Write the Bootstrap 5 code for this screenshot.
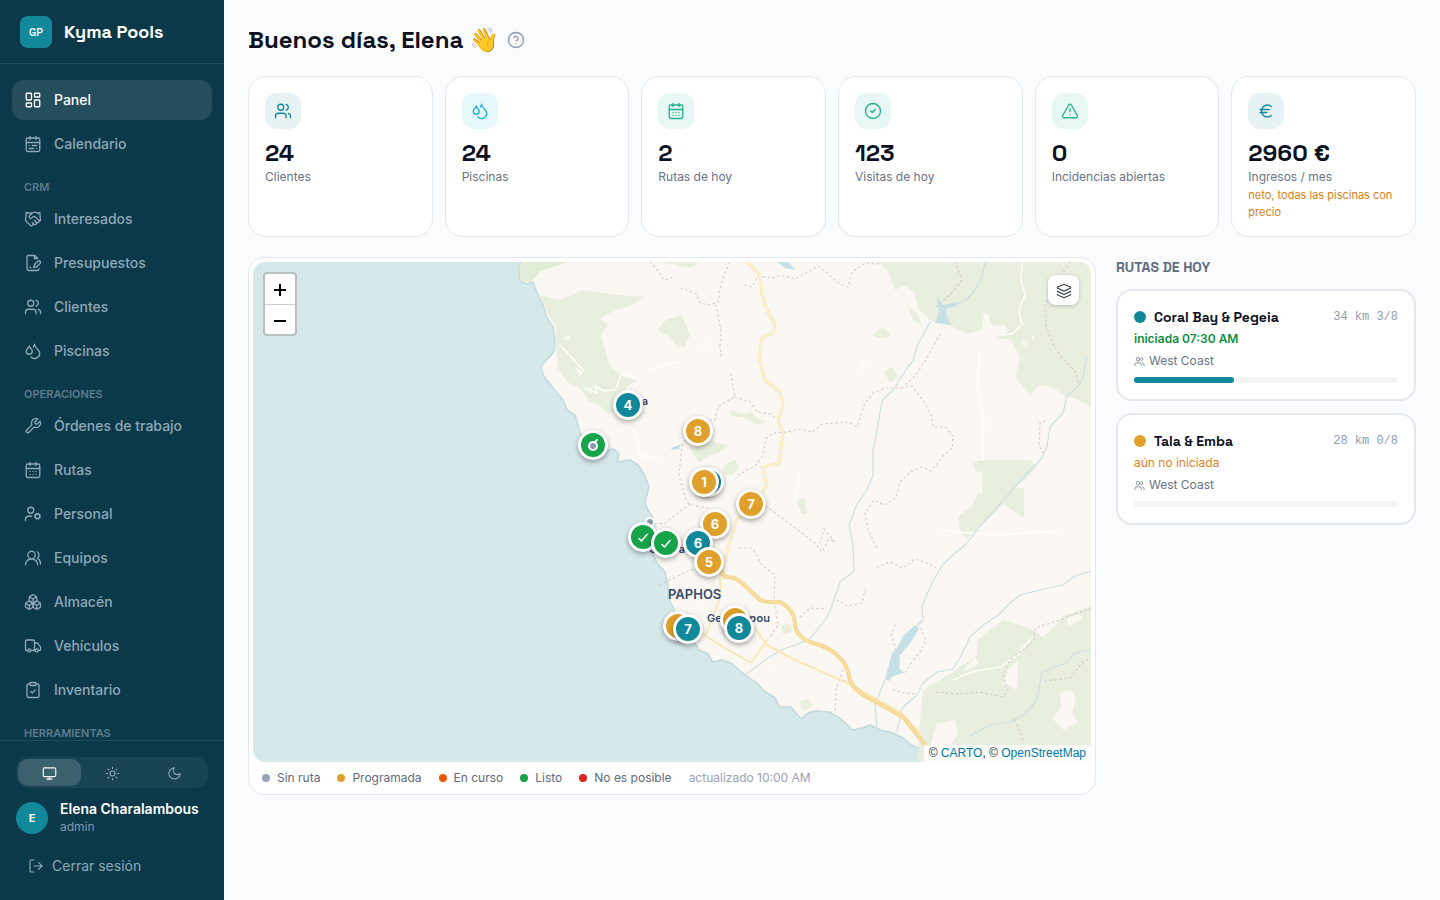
<!DOCTYPE html>
<html lang="es">
<head>
<meta charset="utf-8">
<meta name="viewport" content="width=device-width, initial-scale=1">
<title>Kyma Pools – Panel</title>
<link href="https://cdn.jsdelivr.net/npm/bootstrap@5.3.0/dist/css/bootstrap.min.css" rel="stylesheet">
<style>
:root{--ink:#0c1122;--muted:#697386;--teal:#12899a;--amber:#dfa12b;--green:#16a34a;--line:#e3e8ee}
body{font-family:Inter,"Noto Sans",sans-serif;background:#f9fbfd;color:var(--ink);font-size:14px;line-height:20px}
.ico{fill:none;stroke:currentColor;stroke-width:1.75;stroke-linecap:round;stroke-linejoin:round;width:18px;height:18px;flex:none}
.display-face{font-family:"Space Grotesk",Inter,sans-serif}
/* Sidebar */
.side{width:224px;height:100vh;top:0;background:#0b394a;color:#8ba3b5}
.side-head{height:64px;padding:0 20px;border-bottom:1px solid #234d5c}
.logo-box{width:32px;height:32px;border-radius:8px;background:var(--teal);color:#fff;font-size:11px;font-weight:500}
.brand-name{font-size:18px;font-weight:600;color:#fff}
.side-scroll{padding:16px 12px 0;overflow:hidden;min-height:0}
.side-link{height:40px;flex-shrink:0;padding:0 12px;margin-bottom:4px;gap:12px;border-radius:12px;color:#8fa8b8;font-weight:500;font-size:14px}
.side-link:hover{color:#fff}
.side-link.active{background:#254e5d;color:#fff}
.side-label{font-size:11px;font-weight:600;line-height:15px;padding:12px 12px 4px;color:#5d7c8e;height:31px;margin:0;flex-shrink:0}
.side-foot{padding:16px;border-top:1px solid #234d5c;height:160px}
.seg{background:#174353;border-radius:12px;padding:2px;height:31px}
.seg-btn{border:0;background:transparent;color:#8fa8b8;border-radius:10px;padding:0}
.seg-btn.on{background:#3b616e;color:#fff}
.seg-btn .ico{width:15px;height:15px}
.user-row{margin:12px 0}
.avatar{width:32px;height:32px;background:var(--teal);color:#fff;font-size:11px;font-weight:700}
.user-name{color:#fff;font-weight:600;line-height:18px}
.user-role{font-size:12px;line-height:17px;color:#7f9aaa}
.exit-btn{border:0;background:none;color:#8fa8b8;padding:0 12px;gap:8px;height:38px}
.exit-btn .ico{width:16px;height:16px}
/* Content */
.content-area{padding:24px;min-width:0}
.greet{font-size:24px;line-height:32px;font-weight:600}
.help-btn{border:0;background:none;padding:0;color:#8d97ab;line-height:0}
.stats{display:grid;grid-template-columns:repeat(6,minmax(0,1fr));gap:12px;margin-top:20px}
.stat{background:#fff;border:1px solid var(--line);border-radius:18px;padding:16px 16px 15px;min-height:161px}
.stat-ico{width:36px;height:36px;border-radius:12px;margin-bottom:8px}
.t-teal{background:#e6f2f4;color:var(--teal)}.t-cyan{background:#e7f8fb;color:#13b3cc}.t-green{background:#e7f7f3;color:#22b190}
.stat-num{font-size:24px;line-height:32px;font-weight:700}
.cap{font-size:12px;line-height:16px;color:var(--muted)}
.cap-warn{font-size:11px;line-height:17px;color:#d97f16;margin-top:2px}
.board{display:grid;grid-template-columns:minmax(0,1fr) 300px;gap:20px;margin-top:20px;align-items:start}
.map-card{background:#fff;border:1px solid var(--line);border-radius:16px;padding:4px 4px 0}
.map-view{height:500px;border-radius:12px;background:#d5e8ea}
.map-view>svg{width:100%;height:100%;display:block}
.zoomer{left:10px;top:10px;border:2px solid #b8bfc0;border-radius:4px;width:34px;background:#fff}
.zoomer button{display:block;width:30px;height:30px;border:0;background:none;padding:0;color:#000}
.zoomer button+button{border-top:1px solid #ccc}
.layer-btn{right:12px;top:13px;width:31px;height:30px;border:0;border-radius:8px;background:#fff;color:#374151;padding:0;box-shadow:0 1px 4px rgba(0,0,0,.2)}
.layer-btn .ico{width:16px;height:16px}
.attrib{right:0;bottom:0;background:#ffffffd9;font:12px/17px "Liberation Sans",Arial,sans-serif;padding:0 5px;color:#333}
.attrib a{color:#0078a8;text-decoration:none}
/* Pins are placed relative to the map centre */
.pin{width:30px;height:30px;border:3px solid #fff;border-radius:50%;color:#fff;font-size:13px;font-weight:700;line-height:1;padding:0;box-shadow:0 2px 5px rgba(0,0,0,.35);left:calc(50% + var(--x)*1px - 15px);top:calc(50% + var(--y)*1px - 15px)}
.p-teal{background:var(--teal)}.p-amber{background:var(--amber)}.p-green{background:#17a34a}
.pin .ico{width:14px;height:14px}
.pin .ico.tick{width:12px;height:12px;stroke-width:3}
.legend-row{padding:8px 9px;gap:17px;font-size:12px;line-height:16px;color:#5f6a7d}
.legend-row span{display:inline-flex;align-items:center;gap:7px}
.legend-row i{width:8px;height:8px;border-radius:50%}
.g-none{background:#94a3b8}.g-plan{background:var(--amber)}.g-run{background:#ea580c}.g-done{background:var(--green)}.g-fail{background:#dc2626}
.routes-title{font-size:14px;line-height:20px;font-weight:600;color:#5f6b7f;margin:0 0 12px}
.route{background:#fff;border:2px solid var(--line);border-radius:16px;padding:16px;height:112px;margin-bottom:12px;color:inherit;text-decoration:none}
.route-dot{width:12px;height:12px;border-radius:50%}
.route-name{font-weight:600}
.route-km{font:12px/20px "Liberation Mono",monospace;color:#929bb0;white-space:pre}
.route-state{font-size:12px;line-height:16px;margin-top:4px}
.route-team{font-size:12px;line-height:16px;margin-top:6px;color:var(--muted);gap:4px}
.route-team .ico{width:11px;height:11px}
.bar-track{height:6px;border-radius:3px;background:#f2f4f6;margin-top:8px}
.bar-fill{height:6px;border-radius:3px;background:var(--teal)}
@media (max-width:1100px){.stats{grid-template-columns:repeat(3,minmax(0,1fr))}.board{grid-template-columns:minmax(0,1fr)}}
</style>
</head>
<body>
<svg width="0" height="0" class="position-absolute" aria-hidden="true"><defs>
<symbol id="dash" viewBox="0 0 24 24"><rect x="3" y="3" width="7" height="9" rx="1"/><rect x="14" y="3" width="7" height="5" rx="1"/><rect x="14" y="12" width="7" height="9" rx="1"/><rect x="3" y="16" width="7" height="5" rx="1"/></symbol>
<symbol id="calr" viewBox="0 0 24 24"><rect x="3" y="4" width="18" height="18" rx="2"/><path d="M16 2v4M3 10h18M8 2v4M17 14h-6M13 18H7M7 14h.01M17 18h.01"/></symbol>
<symbol id="cald" viewBox="0 0 24 24"><rect x="3" y="4" width="18" height="18" rx="2"/><path d="M16 2v4M3 10h18M8 2v4M8 14h.01M12 14h.01M16 14h.01M8 18h.01M12 18h.01M16 18h.01"/></symbol>
<symbol id="hand" viewBox="0 0 24 24"><path d="m11 17 2 2a1 1 0 1 0 3-3"/><path d="m14 14 2.5 2.5a1 1 0 1 0 3-3l-3.88-3.88a3 3 0 0 0-4.24 0l-.88.88a1 1 0 1 1-3-3l2.81-2.81a5.79 5.79 0 0 1 7.06-.87l.47.28a2 2 0 0 0 1.42.25L21 4"/><path d="m21 3 1 11h-2M3 3 2 14l6.5 6.5a1 1 0 1 0 3-3M3 4h8"/></symbol>
<symbol id="file" viewBox="0 0 24 24"><path d="M20 19.5v.5a2 2 0 0 1-2 2H6a2 2 0 0 1-2-2V4a2 2 0 0 1 2-2h8.5L18 5.500M14 2v4h4M8 18h1"/><path d="M18.42 9.610a2.100 2.100 0 1 1 2.970 2.970L16.950 17 13 18l.99-3.950 4.430-4.440Z"/></symbol>
<symbol id="users" viewBox="0 0 24 24"><path d="M16 21v-2a4 4 0 0 0-4-4H6a4 4 0 0 0-4 4v2"/><circle cx="9" cy="7" r="4"/><path d="M22 21v-2a4 4 0 0 0-3-3.87M16 3.13a4 4 0 0 1 0 7.75"/></symbol>
<symbol id="drops" viewBox="0 0 24 24"><path d="M7 16.3c2.200 0 4-1.830 4-4.050 0-1.160-.57-2.260-1.710-3.190S7.290 6.750 7 5.300c-.29 1.450-1.140 2.840-2.290 3.760S3 11.100 3 12.250c0 2.220 1.800 4.050 4 4.050z"/><path d="M12.560 6.600A10.970 10.970 0 0 0 14 3.020c.5 2.500 2 4.900 4 6.500s3 3.500 3 5.500a6.980 6.980 0 0 1-11.910 4.970"/></symbol>
<symbol id="wrench" viewBox="0 0 24 24"><path d="M14.7 6.3a1 1 0 0 0 0 1.4l1.6 1.6a1 1 0 0 0 1.400 0l3.770-3.770a6 6 0 0 1-7.940 7.940l-6.910 6.910a2.120 2.120 0 0 1-3-3l6.910-6.910a6 6 0 0 1 7.940-7.940l-3.760 3.760z"/></symbol>
<symbol id="ucog" viewBox="0 0 24 24"><circle cx="9" cy="7" r="4"/><path d="M10 15H6a4 4 0 0 0-4 4v2"/><circle cx="18" cy="15" r="3"/><path d="m14.300 16.530.92-.38M15.230 13.850l-.92-.38M16.850 12.230l-.38-.92M16.850 17.770l-.38.92M19.150 12.230l.38-.92M19.530 18.700l-.38-.92M20.770 13.850l.92-.38M20.770 16.150l.92.38"/></symbol>
<symbol id="uround" viewBox="0 0 24 24"><path d="M18 21a8 8 0 0 0-16 0"/><circle cx="10" cy="8" r="5"/><path d="M22 20c0-3.370-2-6.500-4-8a5 5 0 0 0-.45-8.300"/></symbol>
<symbol id="boxes" viewBox="0 0 24 24"><path d="M2.970 12.920A2 2 0 0 0 2 14.630v3.240a2 2 0 0 0 .97 1.710l3 1.800a2 2 0 0 0 2.060 0L12 19v-5.500l-5-3-4.030 2.420Z"/><path d="m7 16.500-4.740-2.850M7 16.500l5-3M7 16.500v5.170M12 13.500V19l3.970 2.380a2 2 0 0 0 2.060 0l3-1.800a2 2 0 0 0 .97-1.710v-3.240a2 2 0 0 0-.97-1.710L17 10.500l-5 3Z"/><path d="m17 16.500-5-3M17 16.500l4.740-2.850M17 16.500v5.170M7.970 4.420A2 2 0 0 0 7 6.130v4.370l5 3 5-3V6.130a2 2 0 0 0-.97-1.710l-3-1.800a2 2 0 0 0-2.060 0l-3 1.800Z"/><path d="M12 8 7.260 5.150M12 8l4.740-2.850M12 13.500V8"/></symbol>
<symbol id="truck" viewBox="0 0 24 24"><path d="M14 18V6a2 2 0 0 0-2-2H4a2 2 0 0 0-2 2v11a1 1 0 0 0 1 1h2M15 18H9M19 18h2a1 1 0 0 0 1-1v-3.650a1 1 0 0 0-.22-.62l-3.480-4.350A1 1 0 0 0 17.520 8H14"/><circle cx="17" cy="18" r="2"/><circle cx="7" cy="18" r="2"/></symbol>
<symbol id="clip" viewBox="0 0 24 24"><rect x="8" y="2" width="8" height="4" rx="1"/><path d="M16 4h2a2 2 0 0 1 2 2v14a2 2 0 0 1-2 2H6a2 2 0 0 1-2-2V6a2 2 0 0 1 2-2h2M9 14l2 2 4-4"/></symbol>
<symbol id="monitor" viewBox="0 0 24 24"><rect x="2" y="3" width="20" height="14" rx="2"/><path d="M8 21h8M12 17v4"/></symbol>
<symbol id="sun" viewBox="0 0 24 24"><circle cx="12" cy="12" r="4"/><path d="M12 2v2M12 20v2M4.930 4.930l1.410 1.410M17.660 17.660l1.410 1.410M2 12h2M20 12h2M6.340 17.660l-1.410 1.410M19.070 4.930l-1.410 1.410"/></symbol>
<symbol id="moon" viewBox="0 0 24 24"><path d="M12 3a6 6 0 0 0 9 9 9 9 0 1 1-9-9Z"/></symbol>
<symbol id="exit" viewBox="0 0 24 24"><path d="M9 21H5a2 2 0 0 1-2-2V5a2 2 0 0 1 2-2h4M16 17l5-5-5-5M21 12H9"/></symbol>
<symbol id="help" viewBox="0 0 24 24"><circle cx="12" cy="12" r="10"/><path d="M9.090 9a3 3 0 0 1 5.830 1c0 2-3 3-3 3M12 17h.01"/></symbol>
<symbol id="okc" viewBox="0 0 24 24"><circle cx="12" cy="12" r="10"/><path d="m9 12 2 2 4-4"/></symbol>
<symbol id="alert" viewBox="0 0 24 24"><path d="m21.730 18-8-14a2 2 0 0 0-3.480 0l-8 14A2 2 0 0 0 4 21h16a2 2 0 0 0 1.730-3M12 9v4M12 17h.01"/></symbol>
<symbol id="euro" viewBox="0 0 24 24"><path d="M4 10h12M4 14h9M19 6a7.700 7.700 0 0 0-5.200-2A7.900 7.900 0 0 0 6 12c0 4.400 3.500 8 7.800 8 2 0 3.800-.8 5.200-2"/></symbol>
<symbol id="layers" viewBox="0 0 24 24"><path d="M12.830 2.180a2 2 0 0 0-1.660 0L2.600 6.080a1 1 0 0 0 0 1.830l8.580 3.910a2 2 0 0 0 1.660 0l8.580-3.900a1 1 0 0 0 0-1.830Z"/><path d="M2 12a1 1 0 0 0 .58.91l8.600 3.910a2 2 0 0 0 1.650 0l8.580-3.900A1 1 0 0 0 22 12M2 17a1 1 0 0 0 .58.91l8.600 3.910a2 2 0 0 0 1.650 0l8.580-3.900A1 1 0 0 0 22 17"/></symbol>
<symbol id="tick" viewBox="0 0 24 24"><path d="M20 5 9 18l-5-5"/></symbol>
</defs></svg>

<div class="d-flex align-items-start">
<aside class="side d-flex flex-column position-sticky flex-shrink-0">
  <div class="side-head d-flex align-items-center gap-2 flex-shrink-0">
    <div class="logo-box display-face d-flex align-items-center justify-content-center me-1">GP</div>
    <div class="brand-name display-face">Kyma Pools</div>
  </div>
  <nav class="side-scroll nav flex-column flex-nowrap flex-grow-1">
    <a href="#" class="side-link nav-link d-flex align-items-center active"><svg class="ico"><use href="#dash"/></svg>Panel</a>
    <a href="#" class="side-link nav-link d-flex align-items-center"><svg class="ico"><use href="#calr"/></svg>Calendario</a>
    <p class="side-label">CRM</p>
    <a href="#" class="side-link nav-link d-flex align-items-center"><svg class="ico"><use href="#hand"/></svg>Interesados</a>
    <a href="#" class="side-link nav-link d-flex align-items-center"><svg class="ico"><use href="#file"/></svg>Presupuestos</a>
    <a href="#" class="side-link nav-link d-flex align-items-center"><svg class="ico"><use href="#users"/></svg>Clientes</a>
    <a href="#" class="side-link nav-link d-flex align-items-center"><svg class="ico"><use href="#drops"/></svg>Piscinas</a>
    <p class="side-label">OPERACIONES</p>
    <a href="#" class="side-link nav-link d-flex align-items-center"><svg class="ico"><use href="#wrench"/></svg>Órdenes de trabajo</a>
    <a href="#" class="side-link nav-link d-flex align-items-center"><svg class="ico"><use href="#cald"/></svg>Rutas</a>
    <a href="#" class="side-link nav-link d-flex align-items-center"><svg class="ico"><use href="#ucog"/></svg>Personal</a>
    <a href="#" class="side-link nav-link d-flex align-items-center"><svg class="ico"><use href="#uround"/></svg>Equipos</a>
    <a href="#" class="side-link nav-link d-flex align-items-center"><svg class="ico"><use href="#boxes"/></svg>Almacén</a>
    <a href="#" class="side-link nav-link d-flex align-items-center"><svg class="ico"><use href="#truck"/></svg>Vehículos</a>
    <a href="#" class="side-link nav-link d-flex align-items-center"><svg class="ico"><use href="#clip"/></svg>Inventario</a>
    <p class="side-label">HERRAMIENTAS</p>
  </nav>
  <div class="side-foot flex-shrink-0">
    <div class="seg d-flex">
      <button type="button" class="seg-btn on flex-fill" aria-label="Sistema"><svg class="ico"><use href="#monitor"/></svg></button>
      <button type="button" class="seg-btn flex-fill" aria-label="Claro"><svg class="ico"><use href="#sun"/></svg></button>
      <button type="button" class="seg-btn flex-fill" aria-label="Oscuro"><svg class="ico"><use href="#moon"/></svg></button>
    </div>
    <div class="user-row d-flex align-items-center">
      <div class="avatar rounded-circle d-flex align-items-center justify-content-center me-2">E</div>
      <div class="ms-1"><div class="user-name text-nowrap">Elena Charalambous</div><div class="user-role">admin</div></div>
    </div>
    <button type="button" class="exit-btn d-flex align-items-center"><svg class="ico"><use href="#exit"/></svg>Cerrar sesión</button>
  </div>
</aside>

<main class="content-area flex-grow-1">
  <div class="d-flex align-items-center gap-2">
    <h1 class="greet display-face mb-0">Buenos días, Elena 👋</h1>
    <button type="button" class="help-btn" aria-label="Ayuda"><svg class="ico"><use href="#help"/></svg></button>
  </div>

  <section class="stats">
    <div class="stat"><div class="stat-ico t-teal d-flex align-items-center justify-content-center"><svg class="ico"><use href="#users"/></svg></div><div class="stat-num display-face">24</div><div class="cap">Clientes</div></div>
    <div class="stat"><div class="stat-ico t-cyan d-flex align-items-center justify-content-center"><svg class="ico"><use href="#drops"/></svg></div><div class="stat-num display-face">24</div><div class="cap">Piscinas</div></div>
    <div class="stat"><div class="stat-ico t-green d-flex align-items-center justify-content-center"><svg class="ico"><use href="#cald"/></svg></div><div class="stat-num display-face">2</div><div class="cap">Rutas de hoy</div></div>
    <div class="stat"><div class="stat-ico t-green d-flex align-items-center justify-content-center"><svg class="ico"><use href="#okc"/></svg></div><div class="stat-num display-face">123</div><div class="cap">Visitas de hoy</div></div>
    <div class="stat"><div class="stat-ico t-green d-flex align-items-center justify-content-center"><svg class="ico"><use href="#alert"/></svg></div><div class="stat-num display-face">0</div><div class="cap">Incidencias abiertas</div></div>
    <div class="stat"><div class="stat-ico t-teal d-flex align-items-center justify-content-center"><svg class="ico"><use href="#euro"/></svg></div><div class="stat-num display-face">2960 €</div><div class="cap">Ingresos / mes</div><div class="cap-warn">neto, todas las piscinas con precio</div></div>
  </section>

  <section class="board">
    <div class="map-card">
      <div class="map-view position-relative overflow-hidden">
        <svg viewBox="253 262 838 500" preserveAspectRatio="xMidYMid slice" fill="none" stroke-linejoin="round" stroke-linecap="round" role="img" aria-label="Mapa de Paphos">
          <path fill="#fbf8f3" stroke="#c3dadd" stroke-width="1.500" d="M522 258L519 268 520 281 527 284 533 282 537 293 543 305 547 318 553 327 555 340 554 352 541 366 543 375 553 388 563 400 567 410 575 415 580 432 585 448 592 456 603 458 608 450 614 449 619 454 617 462 630 460 638 465 645 476 649 487 645 502 647 508 653 518 655 530 650 548 657 563 665 572 668 585 668 598 675 611 684 626 693 640 699 650 708 654 713 662 722 660 731 663 745 675 757 683 764 691 774 697 780 707 791 707 801 719 808 713 815 711 829 712 840 718 853 730 862 728 870 725 880 730 893 733 903 738 913 746 925 751 928 770H1100V255Z"/>
          <g fill="#e9efde">
            <path fill="#e1edd6" d="M522 262L519 268 521 281 531 282 541 271 568 262Z"/>
            <path d="M540 295L560 300 583 290 610 294 643 297 633 305 616 310 600 318 608 325 601 335 606 352 609 365 617 372 625 377 636 381 626 387 622 399 618 410 608 414 598 404 590 402 580 388 567 382 558 368 556 350 556 327 547 312Z"/>
            <path d="M657 330L666 320 682 315 686 325 690 335 685 347 675 344 668 336ZM730 410L742 414 752 412 758 419 766 422 757 425 746 418 731 416ZM690 448L712 441 728 446 718 453 708 456 699 463ZM724 466L735 459 739 468 731 476 722 474ZM797 500L804 498 807 514 801 514ZM873 334L882 327 891 335 886 338 875 337ZM884 371L893 367 898 377 890 383ZM908 307L917 313 922 325 914 322ZM781 625L791 624 792 632 783 634ZM799 702L807 699 813 705 804 711ZM660 262H700L690 268Z"/>
            <path d="M878 262L888 271 895 290 905 285 915 294 918 308 930 320 953 327 967 334 980 339 1010 339 1020 357 1015 378 1030 394 1040 385 1052 387 1063 395 1078 400 1091 407V262Z"/>
            <path d="M973 462L984 460H1030L1037 466 1024 481 1013 488 1024 488 1024 518 1012 510 1003 504 984 523 967 539 960 532 958 516 972 507 980 487Z"/>
            <path d="M923 690L953 672 977 655 977 640 1003 620 1027 627 1043 637 1056 625 1063 616 1091 606V762H918L920 720Z"/>
          </g>
          <g fill="#fbf8f3">
            <path d="M967 334L982 330 984 313 988 314 992 326 1005 325 1008 332 998 336 992 344 1003 349 986 351ZM1060 692L1072 690 1076 700 1072 712 1078 722 1064 730 1052 718 1061 708ZM936 724L955 720 958 735 946 750 930 748ZM1008 670L1018 660 1017 690 1004 684ZM972 476L982 470 983 492 974 496 961 494ZM964 670L975 656 978 664 967 670ZM563 340L568 334 571 339ZM575 367L583 372 580 377ZM588 385L594 392 590 394ZM1022 340l5 4-3 2zM1032 335l3 4-3 1zM1066 618L1080 614 1082 620 1068 626Z"/>
          </g>
          <g stroke="#fffefb" stroke-width="1.500">
            <path d="M584 388L597 393 595 386 604 391 615 390 622 374 632 377M560 345L572 358 584 371M1022 262L1021 280 1025 295 1019 310 1022 325 1012 334 1000 335M979 352L978 390 984 420 983 460M953 680L975 671 1000 667 1018 655 1030 639M635 430L640 455 660 460M700 350L710 342M650 369L680 362M800 470L795 500M858 370L866 360M940 530L990 535 1060 531"/>
            <path d="M690 590L697 605 714 615M672 560L690 575M660 530L690 540M745 590L742 618M755 655L775 670" stroke-width="1"/>
          </g>
          <g fill="#c6e1e5">
            <path d="M937 297L943 305 958 302 957 306 946 309 947 317 951 325 935 323 939 312ZM915 625L919 629 909 645 900 655 899 668 904 673 893 676 889 681 885 679 892 653 897 648 903 636ZM777 262H788L796 270 785 268ZM671 448L681 444 679 449 672 450Z"/>
          </g>
          <g stroke="#cbe0e3" stroke-width="1.200">
            <path d="M985 262L982 277 975 290 966 300 956 304M930 322L917 346 913 361 908 367 893 390 882 401 877 430 873 451 873 476 866 492 857 504 849 525 853 545 854 571 840 582 837 592 828 616 810 639 795 645 781 650 768 658 745 675M885 680L875 704 877 730M1091 571L1075 576 1063 585 1040 590 1020 595 1009 604 997 616 982 626 970 637 961 656 953 669 937 672 923 683 917 695 902 708 897 732M1087 357L1083 377 1078 387 1067 396 1063 413 1050 427 1047 446 1042 458 1020 481 1000 504 982 524 967 543 943 564 932 583 922 606 923 620 916 627M1091 650L1075 653 1066 663 1042 672 1037 700 1025 714 1010 722 990 725 970 736"/>
          </g>
          <g stroke="#d9c9d0" stroke-width="1.200" stroke-dasharray="1.500 3.500">
            <path d="M650 262L658 271 664 280 674 277M681 288L697 294 700 303 710 305 718 302 720 290 724 275 729 263M716 305L719 320 721 330 720 345 721 358M731 374L735 397 725 402 718 407 715 420 705 420 692 430 682 445 679 475 686 500 690 505 708 508M735 397L750 402 757 412 770 414 780 421M690 504L665 523 650 524"/>
            <path d="M745 285L752 287 758 276 774 278 780 275 795 279 808 272 818 266 828 274 840 284 848 287 852 272 865 263 880 264M738 475L755 466 763 455 766 438 773 433 787 432 800 429 812 432 822 424 848 422 857 427 864 405 873 393 885 388 900 388 912 386 923 400 931 415 933 427 945 427 953 436 952 448 944 455 931 471 922 467 910 472 900 482 896 498 884 505 874 500 865 513 868 530 878 550"/>
            <path d="M766 506L790 524 803 534 815 543 822 552 829 539 835 542 824 529 820 543M740 548L752 548 762 565 775 575 774 600 778 625 770 637M877 567L890 562 903 568 915 559 925 562 936 568M800 617L810 608 825 609M837 600L847 606 862 603 865 590M843 670L836 690 835 712M895 625L891 635 896 650M921 628L926 640 920 652 912 662 904 674M893 690L905 693 917 694"/>
            <path d="M1070 262L1058 280 1045 305 1046 325 1052 342 1060 356 1075 371 1079 385M955 262L962 280 950 295 936 307M940 334L926 360 915 376 904 386M1045 421L1040 423 1039 445 1044 455M1091 608L1060 620 1035 628 1034 641 1010 660 1003 675 1008 690 1003 697 980 692 960 694 935 692M1045 681L1070 678 1083 662 1091 658M1015 720L1023 740M660 585L690 570 715 566"/>
          </g>
          <g stroke="#f8e8b8" stroke-width="3">
            <path d="M747 262L760 275 762 295 768 312 775 325 773 333 762 338 759 358 765 380 780 392 783 405 778 422 783 432 779 463 762 467 767 485 750 512 737 519 729 545 721 575"/>
            <path d="M720 575L721 595 706 635M704 635L725 648 751 663 767 640M755 628L767 645 795 660 850 684 900 712 920 733" stroke-width="2"/>
          </g>
          <g stroke="#fff8df" stroke-width="1">
            <path d="M747 262L760 275 762 295 768 312 775 325 773 333 762 338 759 358 765 380 780 392 783 405 778 422 783 432 779 463 762 467 767 485 750 512 737 519 729 545 721 575"/>
          </g>
          <path stroke="#f3d38c" stroke-width="4" d="M715 562L725 577Q736 576 744 585L760 600Q767 603 780 602 795 610 795 625 797 638 813 643 831 647 842 660 848 668 850 680 854 690 865 696L903 717 926 746"/>
          <path stroke="#fadf9f" stroke-width="2" d="M715 562L725 577Q736 576 744 585L760 600Q767 603 780 602 795 610 795 625 797 638 813 643 831 647 842 660 848 668 850 680 854 690 865 696L903 717 926 746"/>
          <circle cx="650" cy="522" r="4" fill="#8d9bb0" stroke="#fff" stroke-width="2"/>
          <g fill="#354a6d" font-family="Inter,sans-serif" font-size="11" font-weight="600">
            <text x="648" y="405" text-anchor="end">a</text>
            <text x="649" y="553">C</text>
            <text x="685" y="553" text-anchor="end">a</text>
            <text x="707" y="622">Ge</text>
            <text x="770" y="622" text-anchor="end">ou</text>
            <text x="756" y="622" text-anchor="end">p</text>
            <text x="668" y="599" font-size="13">PAPHOS</text>
          </g>
        </svg>

        <button type="button" class="pin p-teal position-absolute" style="--x:-44;--y:-107">4</button>
        <button type="button" class="pin p-amber position-absolute" style="--x:26;--y:-81">8</button>
        <button type="button" class="pin p-green position-absolute" style="--x:-79;--y:-67" aria-label="Listo"><svg class="ico" viewBox="0 0 14 14"><path d="M8 5l3-3" stroke-width="2"/><circle cx="7" cy="8" r="4" fill="#8d9bb0" stroke-width="2"/></svg></button>
        <button type="button" class="pin p-teal position-absolute" style="--x:37;--y:-30" aria-label="Parada"></button>
        <button type="button" class="pin p-amber position-absolute" style="--x:32;--y:-30">1</button>
        <button type="button" class="pin p-amber position-absolute" style="--x:79;--y:-8">7</button>
        <button type="button" class="pin p-amber position-absolute" style="--x:43;--y:12">6</button>
        <button type="button" class="pin p-green position-absolute" style="--x:-29;--y:25" aria-label="Listo"><svg class="ico tick"><use href="#tick"/></svg></button>
        <button type="button" class="pin p-green position-absolute" style="--x:-6;--y:31" aria-label="Listo"><svg class="ico tick"><use href="#tick"/></svg></button>
        <button type="button" class="pin p-teal position-absolute" style="--x:26;--y:31">6</button>
        <button type="button" class="pin p-amber position-absolute" style="--x:37;--y:50">5</button>
        <button type="button" class="pin p-amber position-absolute" style="--x:6;--y:114" aria-label="Parada"></button>
        <button type="button" class="pin p-teal position-absolute" style="--x:16;--y:117">7</button>
        <button type="button" class="pin p-amber position-absolute" style="--x:63;--y:108" aria-label="Parada"></button>
        <button type="button" class="pin p-teal position-absolute" style="--x:67;--y:116">8</button>

        <div class="zoomer position-absolute">
          <button type="button" aria-label="Acercar"><svg width="14" height="14" stroke="#000" stroke-width="2"><path d="M1 7h12M7 1v12"/></svg></button>
          <button type="button" aria-label="Alejar"><svg width="14" height="14" stroke="#000" stroke-width="2"><path d="M1 7h12"/></svg></button>
        </div>
        <button type="button" class="layer-btn position-absolute" aria-label="Capas"><svg class="ico"><use href="#layers"/></svg></button>
        <div class="attrib position-absolute">© <a href="#">CARTO</a>, © <a href="#">OpenStreetMap</a></div>
      </div>
      <div class="legend-row d-flex flex-wrap">
        <span><i class="g-none"></i>Sin ruta</span><span><i class="g-plan"></i>Programada</span><span><i class="g-run"></i>En curso</span><span><i class="g-done"></i>Listo</span><span><i class="g-fail"></i>No es posible</span><span style="color:#98a1b3">actualizado 10:00 AM</span>
      </div>
    </div>

    <aside>
      <h2 class="routes-title display-face">RUTAS DE HOY</h2>
      <a href="#" class="route d-block">
        <div class="d-flex align-items-center gap-2"><i class="route-dot p-teal"></i><span class="route-name display-face flex-grow-1">Coral Bay &amp; Pegeia</span><span class="route-km">34 km 3/8</span></div>
        <div class="route-state fw-semibold" style="color:#0d8f3f">iniciada 07:30 AM</div>
        <div class="route-team d-flex align-items-center"><svg class="ico"><use href="#users"/></svg>West Coast</div>
        <div class="bar-track"><div class="bar-fill" style="width:38%"></div></div>
      </a>
      <a href="#" class="route d-block">
        <div class="d-flex align-items-center gap-2"><i class="route-dot p-amber"></i><span class="route-name display-face flex-grow-1">Tala &amp; Emba</span><span class="route-km">28 km 0/8</span></div>
        <div class="route-state" style="color:#e08118">aún no iniciada</div>
        <div class="route-team d-flex align-items-center"><svg class="ico"><use href="#users"/></svg>West Coast</div>
        <div class="bar-track"><div class="bar-fill" style="width:0%"></div></div>
      </a>
    </aside>
  </section>
</main>
</div>
<script src="https://cdn.jsdelivr.net/npm/bootstrap@5.3.0/dist/js/bootstrap.bundle.min.js"></script>
</body>
</html>
